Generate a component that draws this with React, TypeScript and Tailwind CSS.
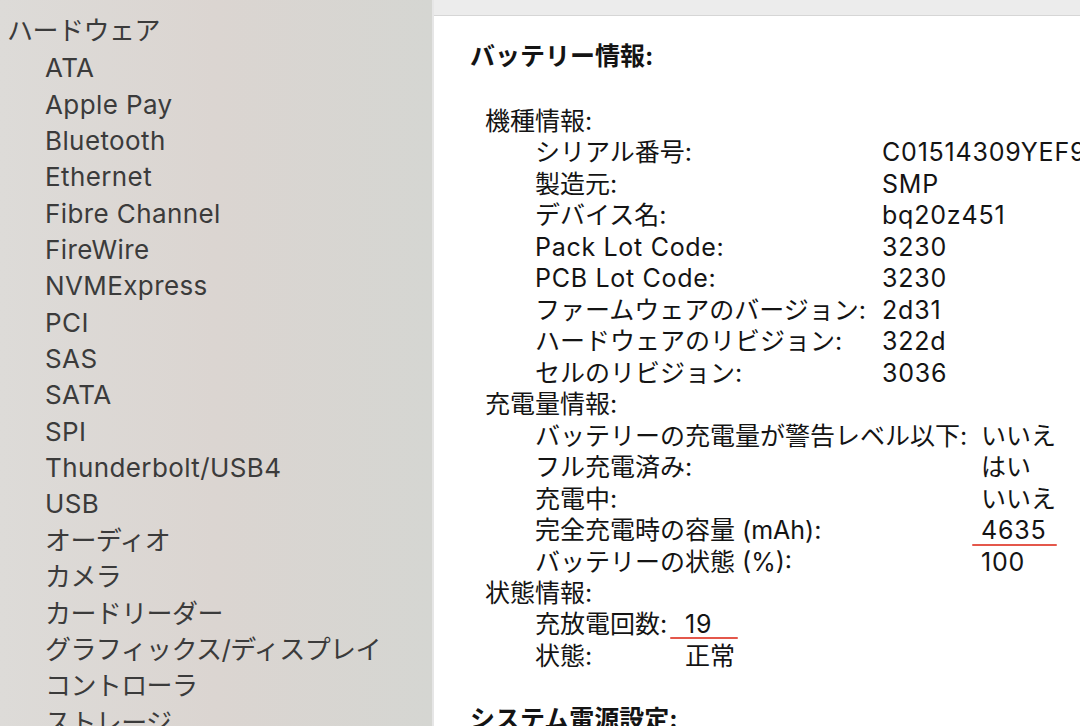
import React from 'react';

const font = { fontFamily: '"Inter", "Noto Sans CJK JP", sans-serif' };

// latin-only strings render a touch wider in the original
const isLatin = (s: string) => /^[\x00-\x7F]+$/.test(s);

const sidebarItems = [
  'ATA',
  'Apple Pay',
  'Bluetooth',
  'Ethernet',
  'Fibre Channel',
  'FireWire',
  'NVMExpress',
  'PCI',
  'SAS',
  'SATA',
  'SPI',
  'Thunderbolt/USB4',
  'USB',
  'オーディオ',
  'カメラ',
  'カードリーダー',
  'グラフィックス/ディスプレイ',
  'コントローラ',
  'ストレージ',
];

type Row = { label: string; value: string; mark?: 'capacity' | 'cycles' };

const modelRows: Row[] = [
  { label: 'シリアル番号:', value: 'C01514309YEF9' },
  { label: '製造元:', value: 'SMP' },
  { label: 'デバイス名:', value: 'bq20z451' },
  { label: 'Pack Lot Code:', value: '3230' },
  { label: 'PCB Lot Code:', value: '3230' },
  { label: 'ファームウェアのバージョン:', value: '2d31' },
  { label: 'ハードウェアのリビジョン:', value: '322d' },
  { label: 'セルのリビジョン:', value: '3036' },
];

const chargeRows: Row[] = [
  { label: 'バッテリーの充電量が警告レベル以下:', value: 'いいえ' },
  { label: 'フル充電済み:', value: 'はい' },
  { label: '充電中:', value: 'いいえ' },
  { label: '完全充電時の容量 (mAh):', value: '4635', mark: 'capacity' },
  { label: 'バッテリーの状態 (%):', value: '100' },
];

const healthRows: Row[] = [
  { label: '充放電回数:', value: '19', mark: 'cycles' },
  { label: '状態:', value: '正常' },
];

function Value({ row }: { row: Row }) {
  return (
    <span className={`relative whitespace-nowrap ${isLatin(row.value) ? 'tracking-[0.8px]' : ''}`}>
      {row.value}
      {row.mark === 'capacity' && (
        <span className="absolute left-[-9px] top-[29px] h-[2px] w-[85px] rounded-full bg-[#e4574b]" />
      )}
      {row.mark === 'cycles' && (
        <span className="absolute left-[-15px] top-[28px] h-[2px] w-[68px] rounded-full bg-[#e4574b]" />
      )}
    </span>
  );
}

function Group({ title, rows, cols }: { title: string; rows: Row[]; cols: string }) {
  return (
    <div>
      <div className="pl-[15px]">{title}</div>
      <div className={`grid pl-[65px] ${cols}`}>
        {rows.map((r) => (
          <React.Fragment key={r.label}>
            <span className={`whitespace-nowrap ${isLatin(r.label) ? 'tracking-[0.7px]' : ''}`}>{r.label}</span>
            <Value row={r} />
          </React.Fragment>
        ))}
      </div>
    </div>
  );
}

export default function App() {
  return (
    <div style={font} className="flex h-[726px] w-[1080px] overflow-hidden bg-white">
      <aside className="w-[432px] shrink-0 bg-linear-to-r from-[#dddbd8] via-[#dbd5d1] to-[#d5d6d2] pt-[13px] text-[26px] leading-[36.35px] text-[#3b3b3b]">
        <div className="pl-[7px] tracking-[-0.5px]">ハードウェア</div>
        <ul className="mt-[1px] pl-[45px]">
          {sidebarItems.map((item) => (
            <li
              key={item}
              className={`whitespace-nowrap ${isLatin(item) ? 'tracking-[0.4px]' : 'tracking-[-0.6px]'}`}
            >
              {item}
            </li>
          ))}
        </ul>
      </aside>
      <main className="flex min-w-0 flex-1 flex-col border-l-2 border-[#e6e6e6]">
        <div className="h-[16px] shrink-0 border-b border-[#d6d6d6] bg-[#ececec]" />
        <div className="pl-[36px] pt-[25px] text-[25px] leading-[31.47px] text-[#141414]">
          <div className="font-bold">バッテリー情報:</div>
          <div className="mt-[33.5px]">
            <Group title="機種情報:" rows={modelRows} cols="grid-cols-[347px_1fr]" />
            <Group title="充電量情報:" rows={chargeRows} cols="grid-cols-[446px_1fr]" />
            <Group title="状態情報:" rows={healthRows} cols="grid-cols-[150px_1fr]" />
          </div>
          <div className="mt-[31.5px] font-bold">システム電源設定:</div>
        </div>
      </main>
    </div>
  );
}
